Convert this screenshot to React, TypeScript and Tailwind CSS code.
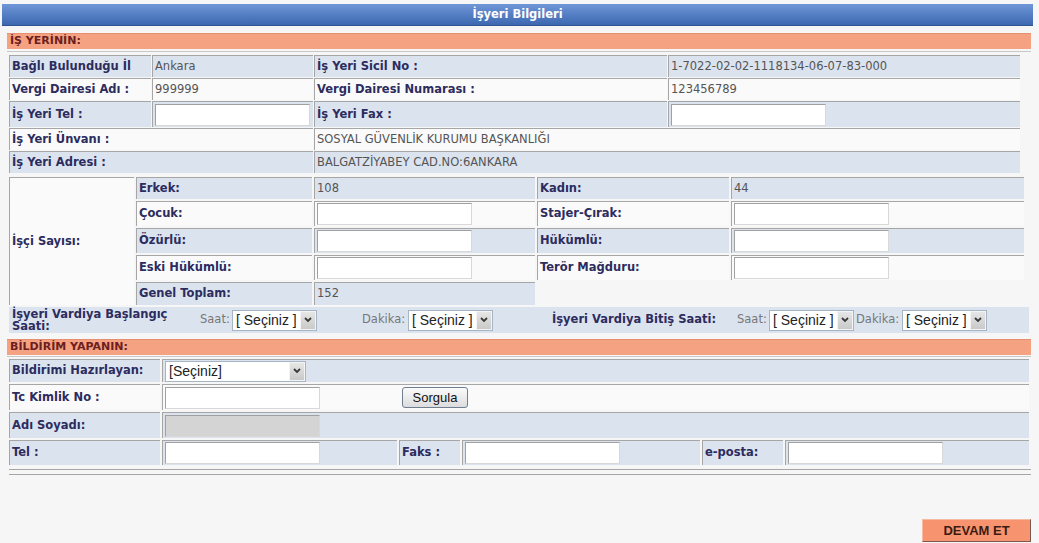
import React from 'react';

const lbl = 'font-bold text-[#2c2c5e] whitespace-nowrap';
const val = 'text-[#555] whitespace-nowrap';
const cell = 'border-t border-l border-[#a6a6a6] px-[2px]';
const blue = 'bg-[#dbe3ef]';
const white = 'bg-[#fafafa]';

const Input: React.FC<{ disabled?: boolean }> = ({ disabled }) => (
  <div
    className={`h-[22px] w-[155px] border border-[#a0a0a0] border-b-[#d8d8d8] border-r-[#d8d8d8] ${
      disabled ? 'bg-[#d4d4d4]' : 'bg-white'
    }`}
  />
);

const Select: React.FC<{ text: string; wide?: boolean }> = ({ text, wide }) => (
  <div
    className={`flex h-[21px] items-stretch border border-[#a7b4c4] bg-white ${wide ? 'w-[141px]' : 'w-[85px]'}`}
  >
    <span className="flex-1 overflow-hidden whitespace-nowrap pl-[3px] font-['Liberation_Sans',Arial,sans-serif] text-[14px] leading-[19px] text-[#222]">
      {text}
    </span>
    <span className="flex w-[16px] items-center justify-center border border-[#f4f4f4] bg-[linear-gradient(#e6e6e6,#c9c9c9)]">
      <svg width="8" height="6" viewBox="0 0 8 6">
        <polyline points="1,1 4,4 7,1" fill="none" stroke="#3a3a3a" strokeWidth="1.8" />
      </svg>
    </span>
  </div>
);

const SectionBar: React.FC<{ title: string }> = ({ title }) => (
  <div className="h-[16px] w-[1024px] border-t border-[#e58e70] bg-[#f5a283] pl-[3px] text-[11px] font-bold leading-[14px] text-[#6e1e1e]">
    {title}
  </div>
);

export default function App() {
  return (
    <div className="min-h-[543px] bg-[#f6f6f6] font-['DejaVu_Sans',Verdana,sans-serif] text-[11.5px]">
      {/* header */}
      <div className="pl-[2px] pt-[4px]">
        <div className="flex h-[22px] w-[1031px] items-center justify-center border-b border-[#2f5590] bg-[linear-gradient(#6f97d8,#3c68b0)] font-bold text-white">
          İşyeri Bilgileri
        </div>
      </div>

      <div className="pl-[7px]">
        <div className="mt-[7px]">
          <SectionBar title="İŞ YERİNİN:" />
        </div>
        <div className="mt-[2px] w-[1024px] border-t border-[#c9c9c9]" />

        {/* iş yeri bilgileri */}
        <table className="ml-[1px] mt-[2px] table-fixed border-separate border-spacing-[1px]">
          <colgroup>
            <col className="w-[142px]" />
            <col className="w-[161px]" />
            <col className="w-[353px]" />
            <col className="w-[352px]" />
          </colgroup>
          <tbody>
            <tr className={blue}>
              <td className={`${cell} h-[22px] ${lbl}`}>Bağlı Bulunduğu İl</td>
              <td className={`${cell} ${val}`}>Ankara</td>
              <td className={`${cell} ${lbl}`}>İş Yeri Sicil No :</td>
              <td className={`${cell} ${val}`}>1-7022-02-02-1118134-06-07-83-000</td>
            </tr>
            <tr className={white}>
              <td className={`${cell} h-[22px] ${lbl}`}>Vergi Dairesi Adı :</td>
              <td className={`${cell} ${val}`}>999999</td>
              <td className={`${cell} ${lbl}`}>Vergi Dairesi Numarası :</td>
              <td className={`${cell} ${val}`}>123456789</td>
            </tr>
            <tr className={blue}>
              <td className={`${cell} h-[26px] ${lbl}`}>İş Yeri Tel :</td>
              <td className={cell}>
                <Input />
              </td>
              <td className={`${cell} ${lbl}`}>İş Yeri Fax :</td>
              <td className={cell}>
                <Input />
              </td>
            </tr>
            <tr className={white}>
              <td colSpan={2} className={`${cell} h-[22px] ${lbl}`}>
                İş Yeri Ünvanı :
              </td>
              <td colSpan={2} className={`${cell} ${val}`}>
                SOSYAL GÜVENLİK KURUMU BAŞKANLIĞI
              </td>
            </tr>
            <tr className={blue}>
              <td colSpan={2} className={`${cell} h-[22px] ${lbl}`}>
                İş Yeri Adresi :
              </td>
              <td colSpan={2} className={`${cell} ${val}`}>
                BALGATZİYABEY CAD.NO:6ANKARA
              </td>
            </tr>
          </tbody>
        </table>

        {/* işçi sayısı */}
        <table className="mt-[1px] table-fixed border-separate border-spacing-[2px]">
          <colgroup>
            <col className="w-[125px]" />
            <col className="w-[176px]" />
            <col className="w-[221px]" />
            <col className="w-[192px]" />
            <col className="w-[293px]" />
          </colgroup>
          <tbody>
            <tr>
              <td rowSpan={5} className={`${cell} ${white} ${lbl}`}>
                İşçi Sayısı:
              </td>
              <td className={`${cell} ${blue} h-[22px] ${lbl}`}>Erkek:</td>
              <td className={`${cell} ${blue} ${val}`}>108</td>
              <td className={`${cell} ${blue} ${lbl}`}>Kadın:</td>
              <td className={`${cell} ${blue} ${val}`}>44</td>
            </tr>
            <tr className={white}>
              <td className={`${cell} h-[25px] ${lbl}`}>Çocuk:</td>
              <td className={cell}>
                <Input />
              </td>
              <td className={`${cell} ${lbl}`}>Stajer-Çırak:</td>
              <td className={cell}>
                <Input />
              </td>
            </tr>
            <tr className={blue}>
              <td className={`${cell} h-[25px] ${lbl}`}>Özürlü:</td>
              <td className={cell}>
                <Input />
              </td>
              <td className={`${cell} ${lbl}`}>Hükümlü:</td>
              <td className={cell}>
                <Input />
              </td>
            </tr>
            <tr className={white}>
              <td className={`${cell} h-[25px] ${lbl}`}>Eski Hükümlü:</td>
              <td className={cell}>
                <Input />
              </td>
              <td className={`${cell} ${lbl}`}>Terör Mağduru:</td>
              <td className={cell}>
                <Input />
              </td>
            </tr>
            <tr>
              <td className={`${cell} ${blue} h-[23px] ${lbl}`}>Genel Toplam:</td>
              <td className={`${cell} ${blue} ${val}`}>152</td>
              <td colSpan={2} />
            </tr>
          </tbody>
        </table>

        {/* vardiya */}
        <div className={`ml-[2px] flex h-[26px] w-[1020px] items-center ${blue}`}>
          <div className="w-[191px] pl-[3px] font-bold leading-[12px] text-[#2c2c5e]">
            İşyeri Vardiya Başlangıç
            <br />
            Saati:
          </div>
          <span className="w-[32px] text-[#777]">Saat:</span>
          <Select text="[ Seçiniz ]" />
          <span className="w-[45px]" />
          <span className="w-[46px] text-[#777]">Dakika:</span>
          <Select text="[ Seçiniz ]" />
          <span className="w-[59px]" />
          <span className={`w-[185px] ${lbl}`}>İşyeri Vardiya Bitiş Saati:</span>
          <span className="w-[32px] text-[#777]">Saat:</span>
          <Select text="[ Seçiniz ]" />
          <span className="ml-[2px] w-[46px] text-[#777]">Dakika:</span>
          <Select text="[ Seçiniz ]" />
        </div>

        <div className="mt-[6px]">
          <SectionBar title="BİLDİRİM YAPANIN:" />
        </div>
        <div className="mt-[1px] w-[1024px] border-t border-[#c9c9c9]" />

        {/* bildirim yapan */}
        <table className="table-fixed border-separate border-spacing-[2px]">
          <colgroup>
            <col className="w-[151px]" />
            <col className="w-[235px]" />
            <col className="w-[61px]" />
            <col className="w-[238px]" />
            <col className="w-[81px]" />
            <col className="w-[244px]" />
          </colgroup>
          <tbody>
            <tr className={blue}>
              <td className={`${cell} h-[23px] ${lbl}`}>Bildirimi Hazırlayan:</td>
              <td colSpan={5} className={cell}>
                <Select text="[Seçiniz]" wide />
              </td>
            </tr>
            <tr className={white}>
              <td className={`${cell} h-[26px] ${lbl}`}>Tc Kimlik No :</td>
              <td colSpan={5} className={cell}>
                <div className="flex items-center">
                  <Input />
                  <button className="ml-[82px] h-[21px] w-[66px] rounded-[3px] border border-[#6f7f92] bg-[linear-gradient(#fbfbfb,#dcdcdc)] font-['Liberation_Sans',Arial,sans-serif] text-[13px] text-[#111]">
                    Sorgula
                  </button>
                </div>
              </td>
            </tr>
            <tr className={blue}>
              <td className={`${cell} h-[26px] ${lbl}`}>Adı Soyadı:</td>
              <td colSpan={5} className={cell}>
                <Input disabled />
              </td>
            </tr>
            <tr className={blue}>
              <td className={`${cell} h-[25px] ${lbl}`}>Tel :</td>
              <td className={cell}>
                <Input />
              </td>
              <td className={`${cell} ${lbl}`}>Faks :</td>
              <td className={cell}>
                <Input />
              </td>
              <td className={`${cell} ${lbl}`}>e-posta:</td>
              <td className={cell}>
                <Input />
              </td>
            </tr>
          </tbody>
        </table>

        <div className="ml-[2px] mt-[2px] w-[1022px] border-t border-[#a6a6a6]" />
        <div className="ml-[2px] mt-[4px] w-[1022px] border-t border-[#a6a6a6]" />

        <div className="mt-[44px] flex w-[1024px] justify-end">
          <button className="h-[23px] w-[109px] border border-[#f6b9a2] border-b-[#7a5a50] border-r-[#7a5a50] bg-[#f7946f] font-['Liberation_Sans',Arial,sans-serif] text-[13px] font-bold text-[#3b1b12]">
            DEVAM ET
          </button>
        </div>
      </div>
    </div>
  );
}
